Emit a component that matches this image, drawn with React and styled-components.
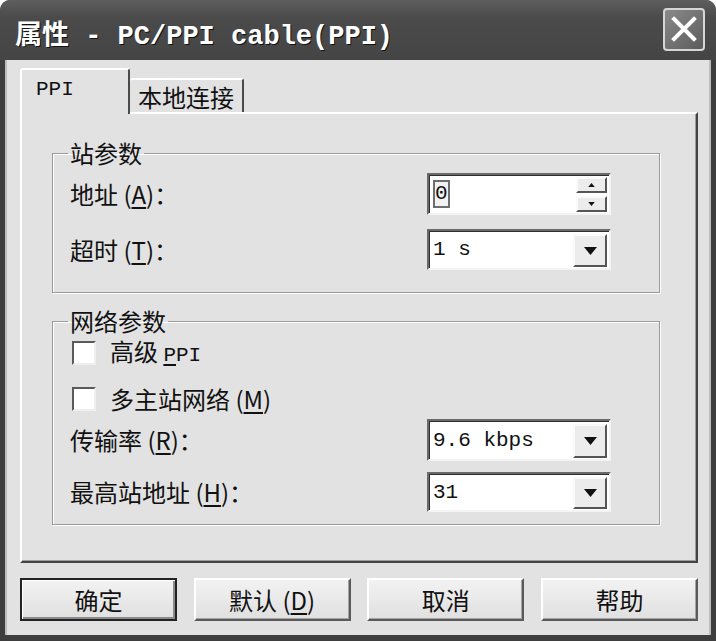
import React from "react";
import styled, { createGlobalStyle } from "styled-components";

const cjk = `"Noto Sans CJK SC", "Noto Sans", sans-serif`;
const mono = `"Liberation Mono", "Noto Sans CJK SC", monospace`;

const GlobalStyle = createGlobalStyle`
  html, body {
    margin: 0;
    padding: 0;
    background: #fff;
  }
  * {
    box-sizing: border-box;
  }
`;

const Window = styled.div`
  width: 716px;
  height: 641px;
  display: flex;
  flex-direction: column;
  background: #3e3e3e;
  border-radius: 10px 10px 0 0;
  overflow: hidden;
  font-family: ${cjk};
  color: #111;
`;

const TitleBar = styled.div`
  height: 60px;
  flex: none;
  display: flex;
  align-items: center;
  justify-content: space-between;
  padding: 4px 11px 0 15px;
  background: linear-gradient(#5e5e5e, #4a4a4a 30%, #454545);
`;

const Title = styled.div`
  color: #fff;
  font-weight: bold;
  font-size: 27px;
  white-space: pre;
  text-shadow: 1px 1px 0 #111;
`;

const TitleMono = styled.span`
  font-family: ${mono};
`;

const CloseButton = styled.div`
  width: 42px;
  height: 43px;
  margin-top: -6px;
  display: flex;
  align-items: center;
  justify-content: center;
  border: 2px solid #d6d6d6;
  border-radius: 4px;
  background: linear-gradient(135deg, #8a8a8a, #5c5c5c);
`;

const Body = styled.div`
  flex: 1;
  display: flex;
  flex-direction: column;
  margin: 0 5px 6px;
  padding: 8px 13px 14px 15px;
  background: #e2e2e2;
  box-shadow: inset 2px 0 0 #bdbdbd, inset -2px 0 0 #bdbdbd;
`;

const TabRow = styled.div`
  height: 44px;
  display: flex;
  align-items: flex-end;
  position: relative;
  z-index: 1;
`;

const Tab = styled.div`
  display: flex;
  align-items: center;
  background: #e2e2e2;
  border-top: 2px solid #fff;
  border-right: 2px solid #4a4a4a;
  border-radius: 3px 3px 0 0;
  font-size: 24px;
  ${(p) =>
    p.$active
      ? `
    width: 110px;
    height: 46px;
    margin-bottom: -2px;
    padding: 0 0 6px 14px;
    border-left: 2px solid #fff;
    font-family: ${mono};
    font-size: 21px;
  `
      : `
    height: 34px;
    padding: 0 8px;
  `}
`;

const Panel = styled.div`
  height: 451px;
  display: flex;
  flex-direction: column;
  gap: 15px;
  padding: 26px 36px 0 30px;
  border-top: 2px solid #fff;
  border-left: 2px solid #fff;
  border-right: 2px solid #444;
  border-bottom: 2px solid #444;
  box-shadow: inset -1px -1px 0 #9c9c9c;
`;

const Group = styled.fieldset`
  margin: 0;
  min-width: 0;
  padding: ${(p) => p.$pad};
  border: 1px solid #9a9a9a;
  box-shadow: inset 1px 1px 0 #fff, 1px 1px 0 #fff;
  display: flex;
  flex-direction: column;
`;

const Legend = styled.legend`
  margin-left: -2px;
  padding: 0 2px;
  font-size: 24px;
  line-height: 26px;
`;

const Row = styled.div`
  display: flex;
  align-items: center;
  justify-content: space-between;
  margin-top: ${(p) => p.$gap || 0}px;
`;

const Label = styled.span`
  font-size: 24px;
  line-height: 26px;
  white-space: pre;
`;

const Key = styled.span`
  text-decoration: underline;
  text-underline-offset: 3px;
`;

const Field = styled.div`
  width: 184px;
  height: ${(p) => p.$h}px;
  display: flex;
  align-items: stretch;
  background: #fff;
  border: 2px solid;
  border-color: #6a6a6a #f4f4f4 #f4f4f4 #6a6a6a;
  box-shadow: inset 1px 1px 0 #2e2e2e;
`;

const Value = styled.div`
  flex: 1;
  display: flex;
  align-items: center;
  padding-left: 4px;
  font-family: ${mono};
  font-size: 21px;
  white-space: pre;
`;

const Caret = styled.span`
  padding: 1px 0;
  border: 2px solid #6e6e6e;
  background: #f2f2f2;
  line-height: 22px;
`;

const SpinStack = styled.div`
  width: 33px;
  display: flex;
  flex-direction: column;
  gap: 3px;
  padding: 2px 2px 1px 0;
`;

const ArrowButton = styled.div`
  flex: 1;
  display: flex;
  align-items: center;
  justify-content: center;
  background: #ececec;
  border: 2px solid;
  border-color: #fafafa #555 #555 #fafafa;
`;

const DropButton = styled(ArrowButton)`
  flex: none;
  width: 34px;
  margin: 3px 2px 1px 0;
`;

const CheckRow = styled.label`
  height: 26px;
  display: flex;
  align-items: center;
  gap: 14px;
  margin: ${(p) => p.$gap}px 0 0 2px;
  font-size: 24px;
  line-height: 26px;
`;

const CheckBox = styled.span`
  width: 24px;
  height: 24px;
  background: #fff;
  border: 2px solid;
  border-color: #5a5a5a #efefef #efefef #5a5a5a;
`;

const Mono = styled.span`
  font-family: ${mono};
  font-size: 21px;
`;

const ButtonRow = styled.div`
  display: flex;
  justify-content: space-between;
  margin-top: 15px;
`;

const Button = styled.button`
  width: 157px;
  height: 43px;
  font-family: ${cjk};
  font-size: 24px;
  color: #111;
  background: linear-gradient(#f2f2f2, #e0e0e0);
  padding: 0;
  border: 2px solid;
  border-color: ${(p) => (p.$default ? "#222" : "#fff #5a5a5a #5a5a5a #fff")};
  box-shadow: ${(p) =>
    p.$default
      ? "inset 1px 1px 0 #fff, inset -2px -2px 0 #8a8a8a"
      : "inset -1px -1px 0 #a4a4a4"};
`;

const Arrow = ({ size }) => (
  <svg width={size === "big" ? 13 : 7} height={size === "big" ? 8 : 4} viewBox="0 0 13 8">
    <path d="M0 0 H13 L6.5 8 Z" fill="#111" />
  </svg>
);

const UpArrow = () => (
  <svg width="7" height="4" viewBox="0 0 13 8">
    <path d="M0 8 H13 L6.5 0 Z" fill="#111" />
  </svg>
);

const Combo = ({ value, h }) => (
  <Field $h={h}>
    <Value>{value}</Value>
    <DropButton>
      <Arrow size="big" />
    </DropButton>
  </Field>
);

export default function App() {
  return (
    <>
      <GlobalStyle />
      <Window>
        <TitleBar>
          <Title>
            属性<TitleMono> - PC/PPI cable(PPI)</TitleMono>
          </Title>
          <CloseButton>
            <svg width="26" height="26" viewBox="0 0 26 26">
              <path d="M3 3 L23 23 M23 3 L3 23" stroke="#fff" strokeWidth="4" strokeLinecap="square" />
            </svg>
          </CloseButton>
        </TitleBar>
        <Body>
          <TabRow>
            <Tab $active>PPI</Tab>
            <Tab>本地连接</Tab>
          </TabRow>
          <Panel>
            <Group $pad="7px 48px 22px 17px">
              <Legend>站参数</Legend>
              <Row>
                <Label>
                  地址 (<Key>A</Key>)：
                </Label>
                <Field $h={42}>
                  <Value>
                    <Caret>0</Caret>
                  </Value>
                  <SpinStack>
                    <ArrowButton>
                      <UpArrow />
                    </ArrowButton>
                    <ArrowButton>
                      <Arrow />
                    </ArrowButton>
                  </SpinStack>
                </Field>
              </Row>
              <Row $gap={14}>
                <Label>
                  超时 (<Key>T</Key>)：
                </Label>
                <Combo value="1 s" h={41} />
              </Row>
            </Group>
            <Group $pad="6px 48px 12px 17px">
              <Legend>网络参数</Legend>
              <CheckRow $gap={0}>
                <CheckBox />
                <span>
                  高级 <Mono><Key>P</Key>PI</Mono>
                </span>
              </CheckRow>
              <CheckRow $gap={20}>
                <CheckBox />
                <span>
                  多主站网络 (<Key>M</Key>)
                </span>
              </CheckRow>
              <Row $gap={7}>
                <Label>
                  传输率 (<Key>R</Key>)：
                </Label>
                <Combo value="9.6 kbps" h={42} />
              </Row>
              <Row $gap={11}>
                <Label>
                  最高站地址 (<Key>H</Key>)：
                </Label>
                <Combo value="31" h={40} />
              </Row>
            </Group>
          </Panel>
          <ButtonRow>
            <Button $default>确定</Button>
            <Button>
              默认 (<Key>D</Key>)
            </Button>
            <Button>取消</Button>
            <Button>帮助</Button>
          </ButtonRow>
        </Body>
      </Window>
    </>
  );
}
